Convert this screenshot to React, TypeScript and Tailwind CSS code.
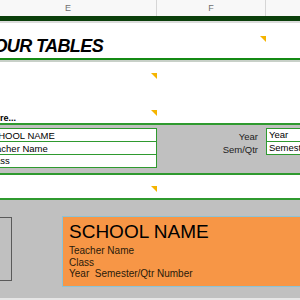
const Marker = ({ className }: { className: string }) => (
  <svg
    className={`absolute ${className}`}
    width="6"
    height="6"
    viewBox="0 0 6 6"
  >
    <polygon points="0,0 6,0 6,6" fill="#f5b400" />
  </svg>
);

const App = () => {
  return (
    <div
      className="relative w-[300px] h-[300px] overflow-hidden bg-white"
      style={{ fontFamily: '"Liberation Sans", Arial, sans-serif' }}
    >
      {/* column headers */}
      <div className="flex h-[16px] bg-[#f8f8f8] text-[9px] text-[#707070]">
        <div className="w-[157px] border-r border-[#d6d6d6] pl-[65px] pt-[2px]">
          E
        </div>
        <div className="w-[109px] border-r border-[#d6d6d6] text-center pt-[2px]">
          F
        </div>
        <div className="flex-1" />
      </div>
      <div className="h-[5px] bg-[#0b3f0b]" />
      <div className="h-[2px] bg-[#dcdcdc]" />

      {/* title */}
      <div className="relative h-[35px]">
        <div className="-ml-[18px] pt-[13px] text-[18px] leading-[20px] font-bold italic text-black tracking-[-0.6px]">
          YOUR TABLES
        </div>
        <Marker className="left-[260px] top-[13px]" />
      </div>
      <div className="h-[2px] bg-[#148a14]" />
      <div className="h-[2px] bg-[#c8d0c8]" />

      {/* instructions */}
      <div className="relative h-[61px]">
        <Marker className="left-[151px] top-[11px]" />
        <Marker className="left-[151px] top-[48px]" />
        <div className="absolute left-0 top-[51px] text-[9px] leading-[10px] font-bold text-black">
          re...
        </div>
      </div>

      {/* tables band */}
      <div className="h-[2px] bg-[#2f9a2f]" />
      <div className="flex h-[48px] bg-[#c0c0c0] pt-[3px]">
        <div className="w-[157px] h-[40px] flex flex-col border border-l-0 border-[#2f9a2f] bg-white text-[9.5px] leading-[12px] text-black overflow-hidden whitespace-nowrap">
          <div className="h-[13px] border-b border-[#2f9a2f] -ml-[15px] pt-[1px]">
            SCHOOL NAME
          </div>
          <div className="h-[13px] border-b border-[#2f9a2f] -ml-[14px] pt-[1px]">
            Teacher Name
          </div>
          <div className="h-[12px] -ml-[14px]">Class</div>
        </div>
        <div className="w-[101px] flex flex-col items-end text-[9.5px] leading-[13px] text-[#222] pt-[2px]">
          <div>Year</div>
          <div>Sem/Qtr</div>
        </div>
        <div className="ml-[8px] flex-1 h-[27px] flex flex-col border border-r-0 border-[#2f9a2f] bg-white text-[9.5px] leading-[12px] text-black pl-[2px] whitespace-nowrap overflow-hidden">
          <div className="h-[13px] border-b border-[#2f9a2f] -ml-[2px] pl-[2px]">
            Year
          </div>
          <div className="h-[12px]">Semester/Qtr</div>
        </div>
      </div>
      <div className="h-[2px] bg-[#2f9a2f]" />
      <div className="relative h-[23px] bg-white">
        <Marker className="left-[151px] top-[11px]" />
      </div>
      <div className="h-[2px] bg-[#2f9a2f]" />

      {/* preview */}
      <div className="flex h-[98px] bg-[#c0c0c0] pt-[16px]">
        <div className="w-[12px] h-[64px] mt-[1px] border border-l-0 border-[#5a5a5a]" />
        <div className="ml-[50px] flex-1 h-[71px] border border-r-0 border-[#8cc3d6] bg-[#f79646] pl-[6px] text-black whitespace-nowrap">
          <div className="text-[19px] leading-[22px] pt-[4px]">SCHOOL NAME</div>
          <div className="text-[10px] leading-[11.5px] text-[#2a1a0a] pt-[2px]">
            <div>Teacher Name</div>
            <div>Class</div>
            <div>Year&nbsp;&nbsp;Semester/Qtr Number</div>
          </div>
        </div>
      </div>
      <div className="h-[6px] bg-[#e6e6e6]" />
    </div>
  );
};

export default App;
